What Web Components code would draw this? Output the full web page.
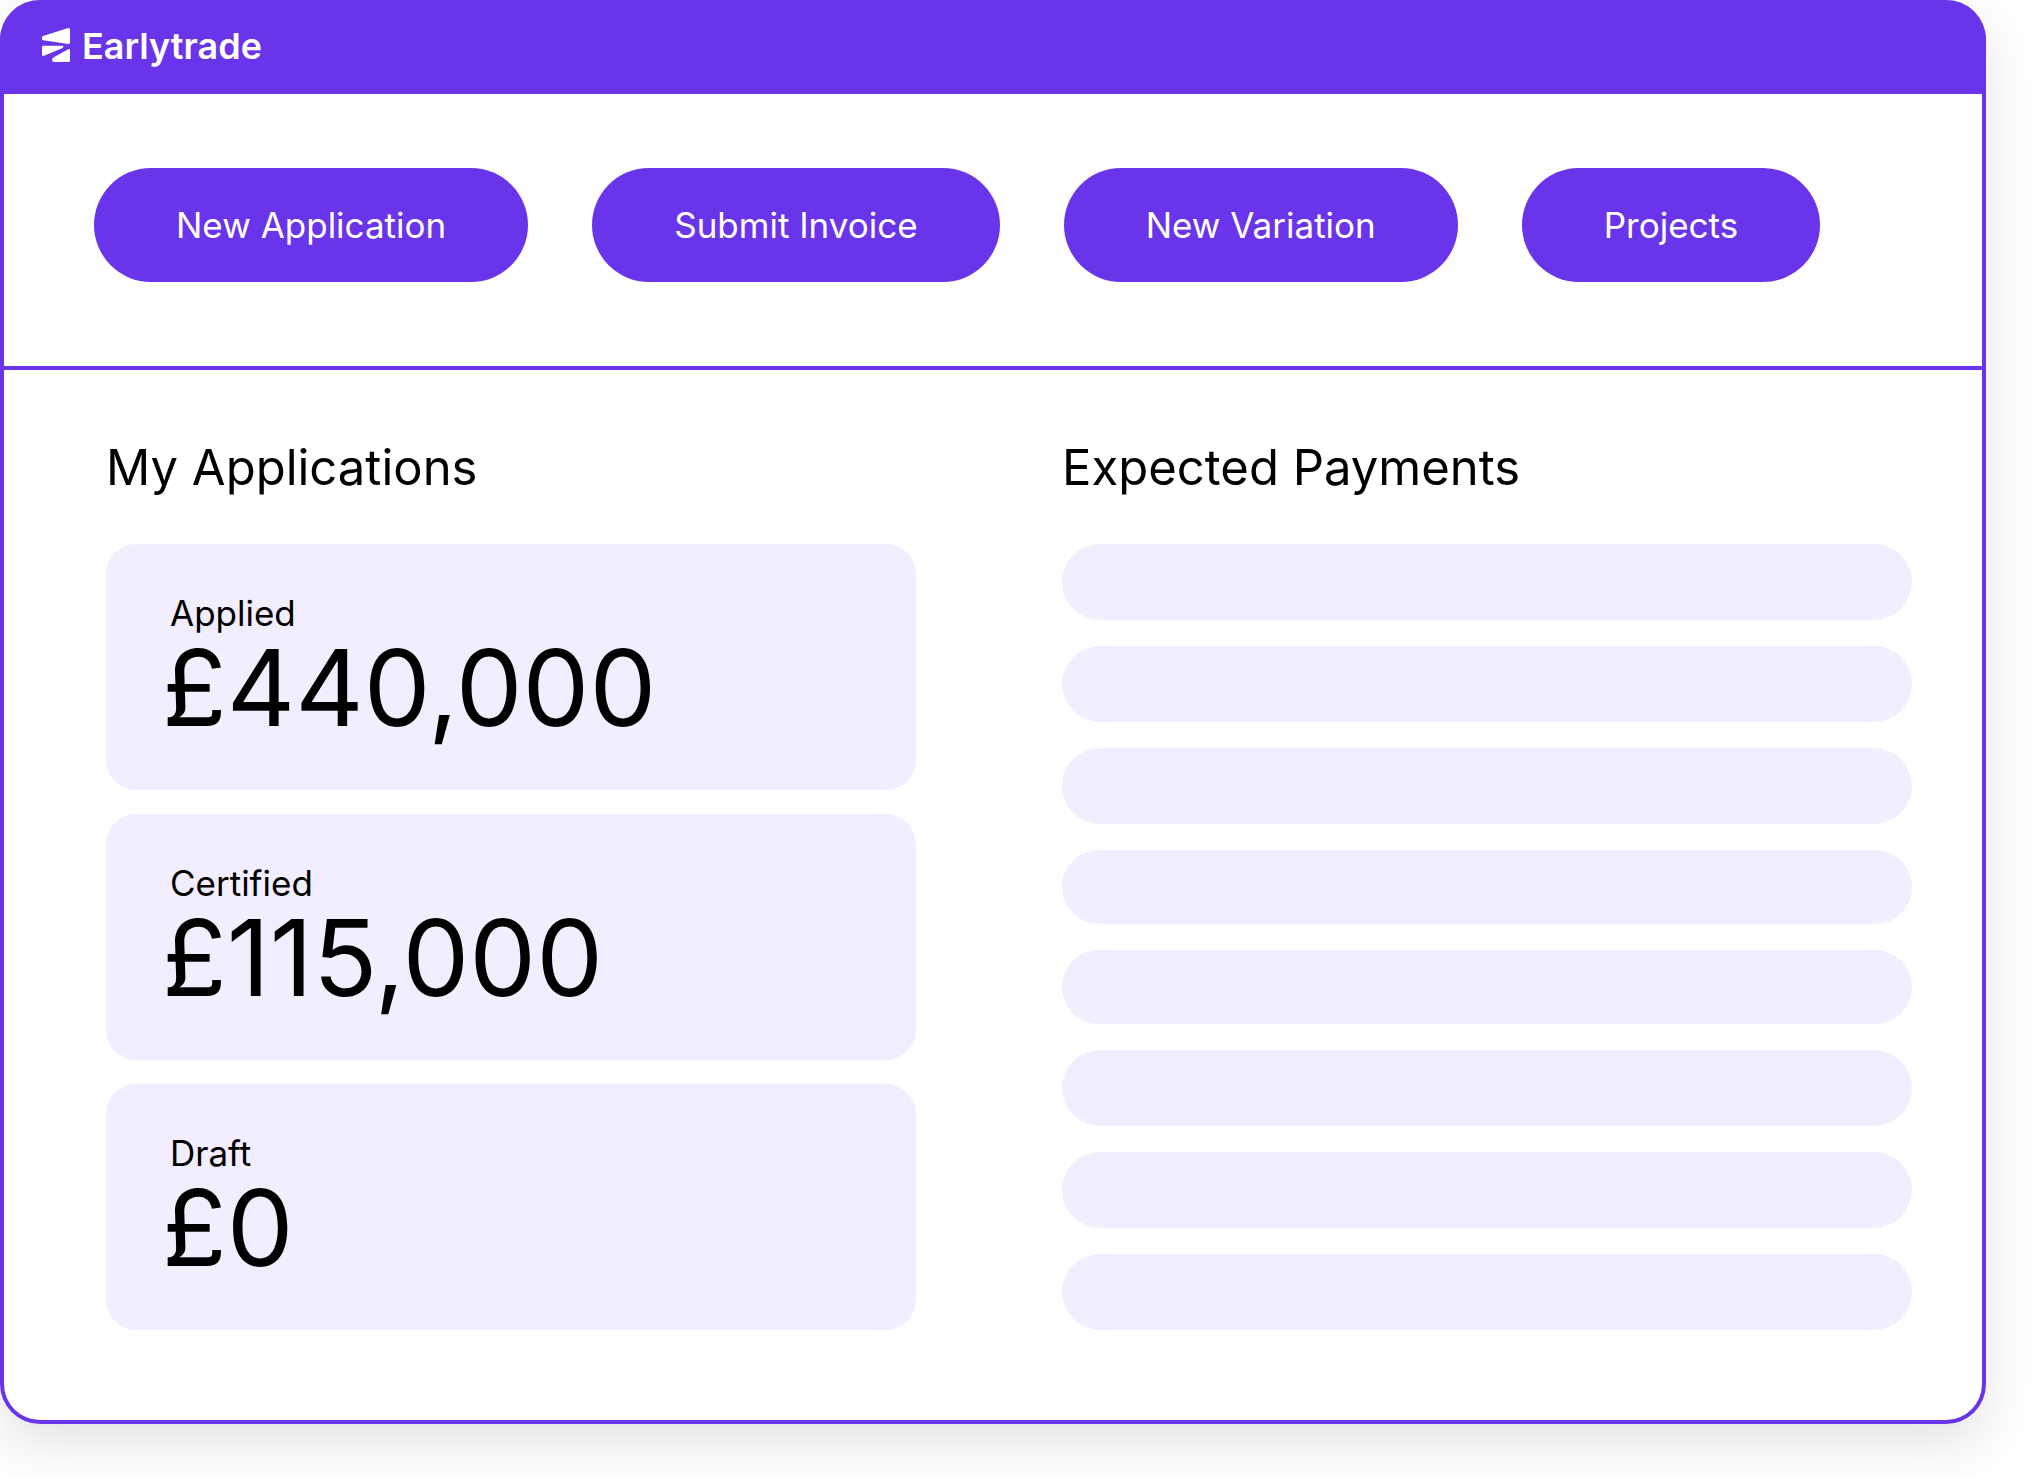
<!DOCTYPE html>
<html lang="en">
<head>
<meta charset="utf-8">
<title>Earlytrade</title>
<style>
  :root {
    --brand: #6a35ea;
    --tint: #f2edff;
  }
  body {
    margin: 0;
    background: #fff;
    color: #000;
    font-family: Inter, "Liberation Sans", sans-serif;
  }
</style>
</head>
<body>
<et-window>
  <et-brand slot="header">Earlytrade</et-brand>
  <et-button slot="actions">New Application</et-button>
  <et-button slot="actions">Submit Invoice</et-button>
  <et-button slot="actions">New Variation</et-button>
  <et-button slot="actions">Projects</et-button>
  <et-panel heading="My Applications">
    <et-stat label="Applied">£440,000</et-stat>
    <et-stat label="Certified">£115,000</et-stat>
    <et-stat label="Draft">£0</et-stat>
  </et-panel>
  <et-panel heading="Expected Payments">
    <et-payments></et-payments>
  </et-panel>
</et-window>

<script>
function define(name, html, setup) {
  const template = document.createElement('template');
  template.innerHTML = html;

  customElements.define(name, class extends HTMLElement {
    constructor() {
      super();
      this.root = this.attachShadow({ mode: 'open' });
      this.root.appendChild(template.content.cloneNode(true));
    }

    connectedCallback() {
      if (setup) setup(this, this.root);
    }
  });
}

define('et-window', `
  <style>
    :host {
      display: block;
      margin: 0 56px 54px 0;
      border: 4px solid var(--brand);
      border-top: 0;
      border-radius: 40px;
      background: #fff;
      box-shadow: 0 20px 50px rgba(0, 0, 0, 0.11);
    }
    header {
      display: flex;
      align-items: center;
      height: 94px;
      padding: 0 38px 2px;
      margin: 0 -4px;
      border-radius: 40px 40px 0 0;
      background: var(--brand);
      box-sizing: border-box;
    }
    nav {
      display: flex;
      flex-wrap: wrap;
      gap: 64px;
      padding: 74px 90px 84px;
      border-bottom: 4px solid var(--brand);
    }
    main {
      display: grid;
      grid-template-columns: 81fr 85fr;
      gap: 146px;
      padding: 68px 70px 90px 102px;
    }
  </style>
  <header><slot name="header"></slot></header>
  <nav><slot name="actions"></slot></nav>
  <main><slot></slot></main>
`);

define('et-brand', `
  <style>
    :host {
      display: flex;
      align-items: center;
      gap: 8px;
      color: #fff;
      font-size: 36px;
      font-weight: 600;
      line-height: 44px;
    }
    svg {
      width: 36px;
      height: 36px;
      fill: currentColor;
    }
  </style>
  <svg viewBox="0 0 36 36" aria-hidden="true">
    <path d="M5.1 8.1 30.2 .1Q32 -.3 32 1.6V14.6Q32 16.1 30.4 15.9L5.2 12.3Q4 12.1 4 10.9V9.5Q4 8.5 5.1 8.1Z"/>
    <path d="M5.2 17.8H24Q25.8 17.9 25.4 19Q25.1 19.7 24 20.2L6 27.7Q4 28.4 4 26.4V19Q4 17.8 5.2 17.8Z"/>
    <path d="M15.4 29.4 30.2 21.2Q32 20.4 32 22.3V32.6Q32 34 30.6 34H15.6Q14.3 34 14.3 32.7V31.2Q14.3 30 15.4 29.4Z"/>
  </svg>
  <slot></slot>
`);

define('et-button', `
  <style>
    :host {
      display: block;
    }
    button {
      height: 114px;
      padding: 0 82px;
      border: 0;
      border-radius: 57px;
      background: var(--brand);
      color: #fff;
      font: inherit;
      font-size: 35px;
      line-height: 44px;
      white-space: nowrap;
      cursor: pointer;
    }
  </style>
  <button type="button"><slot></slot></button>
`);

define('et-panel', `
  <style>
    :host {
      display: flex;
      flex-direction: column;
      min-width: 0;
    }
    h2 {
      margin: 0 0 46px;
      font-size: 49px;
      font-weight: 400;
      line-height: 60px;
    }
    .body {
      display: flex;
      flex-direction: column;
      flex: 1;
      gap: 24px;
    }
  </style>
  <h2></h2>
  <div class="body"><slot></slot></div>
`, (el, root) => {
  root.querySelector('h2').textContent = el.getAttribute('heading');
});

define('et-stat', `
  <style>
    :host {
      display: block;
      padding: 47px 56px 49px;
      border-radius: 30px;
      background: var(--tint);
    }
    .label {
      padding-left: 8px;
      font-size: 35px;
      line-height: 44px;
    }
    .amount {
      font-size: 106px;
      line-height: 106px;
    }
  </style>
  <div class="label"></div>
  <div class="amount"><slot></slot></div>
`, (el, root) => {
  root.querySelector('.label').textContent = el.getAttribute('label');
});

// empty payment rows, nothing expected yet
define('et-payments', `
  <style>
    :host {
      display: grid;
      grid-template-rows: repeat(3, 76px) repeat(2, 74px) repeat(3, 76px);
      gap: 26px;
    }
    div {
      border-radius: 38px;
      background: var(--tint);
    }
  </style>
  ${'<div></div>'.repeat(8)}
`);
</script>
</body>
</html>
